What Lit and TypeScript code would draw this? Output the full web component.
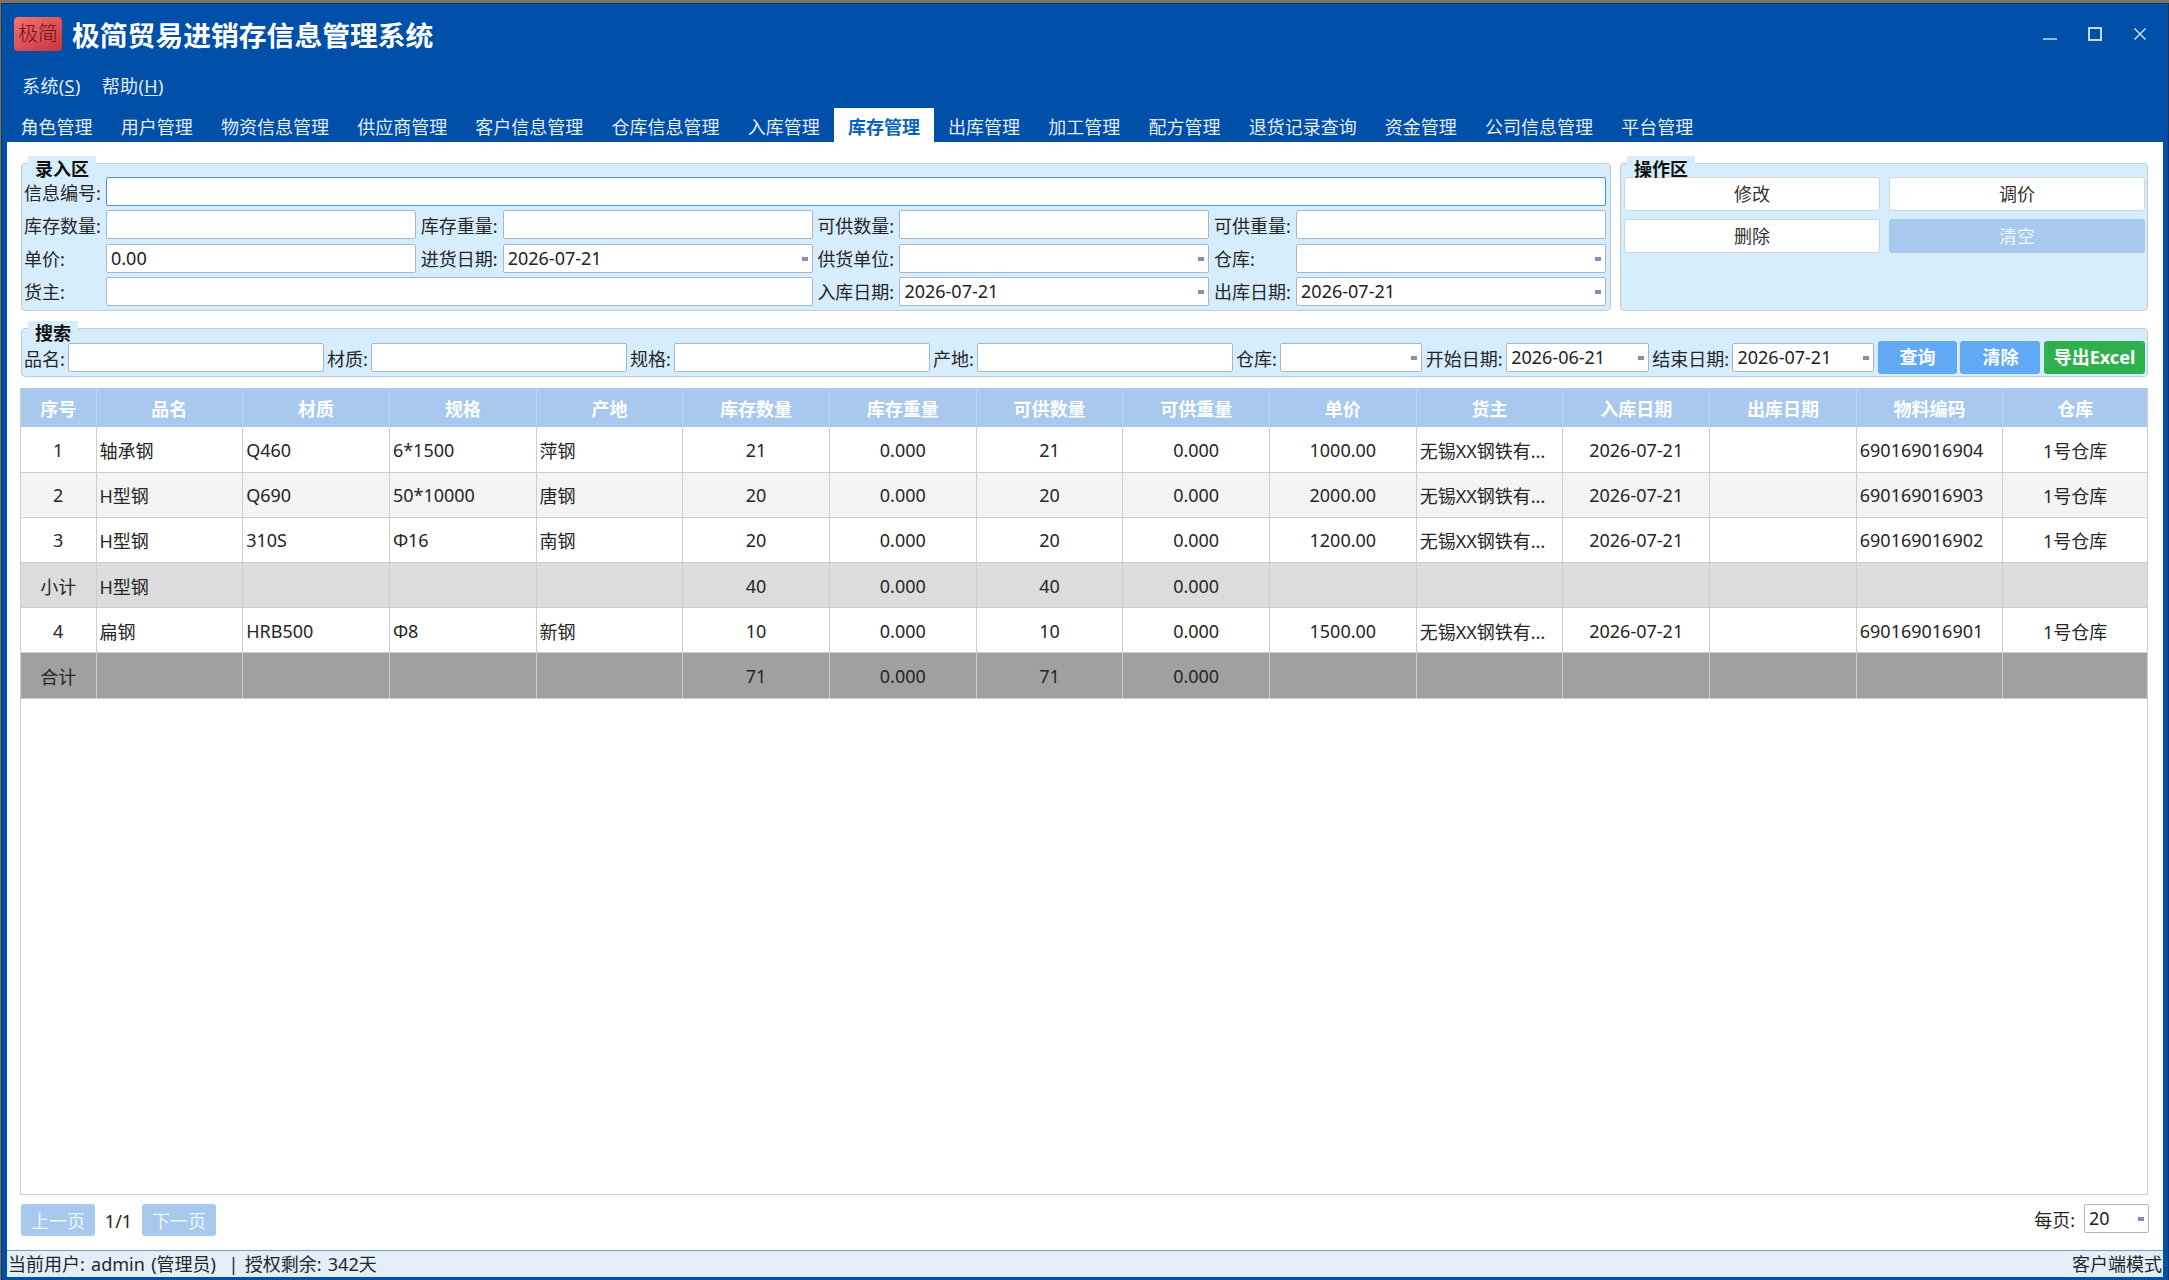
import { LitElement, html, css, nothing } from "lit";
import { customElement } from "lit/decorators.js";

const TABS = [
  "角色管理", "用户管理", "物资信息管理", "供应商管理", "客户信息管理", "仓库信息管理", "入库管理",
  "库存管理", "出库管理", "加工管理", "配方管理", "退货记录查询", "资金管理", "公司信息管理", "平台管理",
];

const HEADERS = [
  "序号", "品名", "材质", "规格", "产地", "库存数量", "库存重量", "可供数量", "可供重量",
  "单价", "货主", "入库日期", "出库日期", "物料编码", "仓库",
];

const OWNER = "无锡XX钢铁有...";
const DATE = "2026-07-21";

// kind: "" normal row, "alt" striped, "sub" subtotal, "sum" total
const ROWS: { kind: string; cells: string[] }[] = [
  { kind: "", cells: ["1", "轴承钢", "Q460", "6*1500", "萍钢", "21", "0.000", "21", "0.000", "1000.00", OWNER, DATE, "", "690169016904", "1号仓库"] },
  { kind: "alt", cells: ["2", "H型钢", "Q690", "50*10000", "唐钢", "20", "0.000", "20", "0.000", "2000.00", OWNER, DATE, "", "690169016903", "1号仓库"] },
  { kind: "", cells: ["3", "H型钢", "310S", "Φ16", "南钢", "20", "0.000", "20", "0.000", "1200.00", OWNER, DATE, "", "690169016902", "1号仓库"] },
  { kind: "sub", cells: ["小计", "H型钢", "", "", "", "40", "0.000", "40", "0.000", "", "", "", "", "", ""] },
  { kind: "", cells: ["4", "扁钢", "HRB500", "Φ8", "新钢", "10", "0.000", "10", "0.000", "1500.00", OWNER, DATE, "", "690169016901", "1号仓库"] },
  { kind: "sum", cells: ["合计", "", "", "", "", "71", "0.000", "71", "0.000", "", "", "", "", "", ""] },
];

// columns whose text sits at the left of the cell
const LEFT_COLS = new Set([1, 2, 3, 4, 10, 13]);

@customElement("app-root")
export class AppRoot extends LitElement {
  static styles = css`
    :host {
      display: block;
      width: 2169px;
      height: 1280px;
      background: #77746a;
      font-family: "Noto Sans", "Noto Sans CJK SC", sans-serif;
      font-size: 18px;
      color: #262626;
      overflow: hidden;
    }

    .window {
      height: 1277px;
      margin: 3px 0 0 1px;
      padding: 0 5px 3px;
      box-sizing: border-box;
      background: #004fa9;
      border: 1px solid #12355f;
      border-bottom: none;
      display: flex;
      flex-direction: column;
    }

    .titlebar {
      height: 66px;
      flex: none;
      padding: 13px 0 0 7px;
      box-sizing: border-box;
      display: flex;
      align-items: flex-start;
    }

    .logo {
      width: 48px;
      height: 34px;
      border-radius: 4px;
      background: linear-gradient(150deg, #f47474, #c9323e);
      color: #6e1018;
      font-size: 20px;
      font-weight: 300;
      line-height: 34px;
      text-align: center;
    }

    .title {
      margin-left: 10px;
      color: #fff;
      font-size: 27.8px;
      font-weight: 700;
      line-height: 36px;
    }

    .controls {
      margin-left: auto;
      margin-right: 16px;
      display: flex;
      gap: 31px;
      padding-top: 10px;
    }

    .controls svg {
      display: block;
      width: 14px;
      height: 14px;
      fill: none;
      stroke: #dbe8f7;
      stroke-width: 1.4;
    }

    .controls svg.max {
      stroke-width: 1.8;
    }

    .menubar {
      height: 38px;
      flex: none;
      display: flex;
      gap: 21px;
      padding-left: 15px;
      color: #e3ecf7;
      line-height: 32px;
      letter-spacing: 0.4px;
    }

    .menubar u {
      text-underline-offset: 2px;
    }

    .tabs {
      height: 34px;
      flex: none;
      display: flex;
      margin-left: -0.5px;
    }

    .tab {
      padding: 3px 14.1px 0;
      color: #e3ecf7;
      line-height: 32px;
      box-sizing: border-box;
      white-space: nowrap;
    }

    .tab.active {
      background: #fff;
      color: #0b62bd;
      font-weight: 700;
    }

    .main {
      flex: 1;
      min-height: 0;
      background: #fff;
      display: flex;
      flex-direction: column;
      padding: 21px 15px 0 14px;
    }

    .top {
      display: flex;
      gap: 9px;
      height: 148px;
      flex: none;
    }

    .group {
      position: relative;
      box-sizing: border-box;
      background: #d6edfe;
      border: 1px solid #c3ccd4;
      border-radius: 4px;
    }

    .group.entry {
      width: 1590px;
      flex: none;
      padding: 13px 0 0 2px;
    }

    .group.ops {
      flex: 1;
      padding: 13px 2px 0 3px;
    }

    .group.search {
      height: 49px;
      flex: none;
      margin-top: 17px;
      padding: 14px 2px 0 2px;
    }

    .legend {
      position: absolute;
      left: 6px;
      top: -8px;
      padding: 0 7px;
      background: #d6edfe;
      color: #111;
      font-weight: 700;
      line-height: 27px;
      height: 20px;
    }

    .search .legend {
      line-height: 25px;
    }

    .entry-grid {
      display: grid;
      grid-template-columns: repeat(4, 392px);
      grid-auto-rows: 29px;
      column-gap: 4.7px;
      row-gap: 4.3px;
    }

    .pair {
      display: flex;
      align-items: center;
    }

    .pair.w2 {
      grid-column: span 2;
    }

    .pair.w4 {
      grid-column: span 4;
    }

    .pair label {
      width: 82px;
      flex: none;
      white-space: nowrap;
    }

    .input {
      position: relative;
      flex: 1;
      min-width: 0;
      height: 29px;
      box-sizing: border-box;
      background: #fff;
      border: 1px solid #a9b6c6;
      border-radius: 2px;
      padding: 0 4px;
      line-height: 26px;
      color: #222;
      white-space: nowrap;
    }

    .input.focus {
      border-color: #4f94c6;
    }

    .input.combo::after {
      content: "";
      position: absolute;
      right: 4px;
      top: 12px;
      width: 6px;
      height: 4px;
      background: #7f92b4;
    }

    .ops-grid {
      display: grid;
      grid-template-columns: 1fr 1fr;
      grid-auto-rows: 34px;
      gap: 8px 9px;
    }

    .btn {
      box-sizing: border-box;
      border-radius: 3px;
      text-align: center;
      white-space: nowrap;
    }

    .btn.plain {
      background: #fff;
      border: 1px solid #cfd6dc;
      line-height: 33px;
      color: #333;
    }

    .btn.disabled {
      background: #a8c8ee;
      color: #eef5fd;
      line-height: 34px;
    }

    .search-row {
      display: flex;
      align-items: center;
      gap: 3.5px;
      height: 29px;
    }

    .search-row label {
      flex: none;
      white-space: nowrap;
    }

    .search-row .input.short {
      flex: none;
      width: 142px;
    }

    .search-row .input.short.wider {
      width: 142.5px;
    }

    .search-row .btn {
      flex: none;
      height: 33px;
      line-height: 33px;
      color: #fff;
      font-weight: 700;
      background: #62aaf5;
    }

    .search-row .btn.query {
      width: 79px;
    }

    .search-row .btn.clear {
      width: 80px;
    }

    .search-row .btn.excel {
      width: 101px;
      background: #2eb04f;
    }

    .table-wrap {
      flex: 1;
      min-height: 0;
      margin: 11px 0 0 -1px;
      border: 1px solid #cdcdcd;
      border-top: none;
      box-sizing: border-box;
    }

    table {
      width: 100%;
      table-layout: fixed;
      border-collapse: collapse;
    }

    col.first {
      width: 75px;
    }

    col.mid {
      width: 146.7px;
    }

    th {
      height: 39px;
      padding: 0;
      background: #a8c8ee;
      color: #fff;
      font-weight: 700;
      border-right: 1px solid #bcd5f2;
      overflow: hidden;
      white-space: nowrap;
    }

    td {
      height: 45.2px;
      padding: 1px 3px 0;
      box-sizing: border-box;
      text-align: center;
      border-right: 1px solid #cdcdcd;
      border-bottom: 1px solid #cdcdcd;
      white-space: nowrap;
      overflow: hidden;
    }

    td.left {
      text-align: left;
    }

    th:last-child,
    td:last-child {
      border-right: none;
    }

    tr.alt td {
      background: #f4f4f4;
    }

    tr.sub td {
      background: #dcdcdc;
    }

    tr.sum td {
      background: #a0a0a0;
    }

    .pager {
      height: 55px;
      flex: none;
      display: flex;
      align-items: flex-start;
      padding-top: 9px;
      box-sizing: border-box;
    }

    .pager .btn {
      width: 74px;
      height: 32px;
      line-height: 34px;
    }

    .pager .page-no {
      width: 47px;
      text-align: center;
      line-height: 34px;
    }

    .page-size {
      margin-left: auto;
      display: flex;
      align-items: center;
      gap: 9px;
      margin-right: -1px;
    }

    .page-size .input {
      flex: none;
      width: 65px;
    }

    .statusbar {
      height: 27px;
      flex: none;
      box-sizing: border-box;
      background: #e3eefa;
      border-top: 1px solid #7d9cbd;
      display: flex;
      justify-content: space-between;
      padding: 0 1px;
      line-height: 27px;
      white-space: pre;
      word-spacing: 1.6px;
    }
  `;

  private combo(value = "") {
    return html`<div class="input combo">${value || nothing}</div>`;
  }

  private pair(label: string, field: unknown, cls = "") {
    return html`<div class="pair ${cls}"><label>${label}</label>${field}</div>`;
  }

  private plain(value = "") {
    return html`<div class="input">${value || nothing}</div>`;
  }

  render() {
    return html`
      <div class="window">
        <div class="titlebar">
          <div class="logo">极简</div>
          <div class="title">极简贸易进销存信息管理系统</div>
          <div class="controls">
            <svg viewBox="0 0 14 14"><path d="M0 12h14" /></svg>
            <svg class="max" viewBox="0 0 14 14"><rect x="1" y="1" width="12" height="12" /></svg>
            <svg viewBox="0 0 14 14"><path d="M1.5 1.5l11 11M12.5 1.5l-11 11" /></svg>
          </div>
        </div>
        <div class="menubar">
          <span>系统(<u>S</u>)</span>
          <span>帮助(<u>H</u>)</span>
        </div>
        <div class="tabs">
          ${TABS.map((t) => html`<div class="tab ${t === "库存管理" ? "active" : ""}">${t}</div>`)}
        </div>
        <div class="main">
          <div class="top">
            <div class="group entry">
              <div class="legend">录入区</div>
              <div class="entry-grid">
                ${this.pair("信息编号:", html`<div class="input focus"></div>`, "w4")}
                ${this.pair("库存数量:", this.plain())}
                ${this.pair("库存重量:", this.plain())}
                ${this.pair("可供数量:", this.plain())}
                ${this.pair("可供重量:", this.plain())}
                ${this.pair("单价:", this.plain("0.00"))}
                ${this.pair("进货日期:", this.combo(DATE))}
                ${this.pair("供货单位:", this.combo())}
                ${this.pair("仓库:", this.combo())}
                ${this.pair("货主:", this.plain(), "w2")}
                ${this.pair("入库日期:", this.combo(DATE))}
                ${this.pair("出库日期:", this.combo(DATE))}
              </div>
            </div>
            <div class="group ops">
              <div class="legend">操作区</div>
              <div class="ops-grid">
                <div class="btn plain">修改</div>
                <div class="btn plain">调价</div>
                <div class="btn plain">删除</div>
                <div class="btn disabled">清空</div>
              </div>
            </div>
          </div>
          <div class="group search">
            <div class="legend">搜索</div>
            <div class="search-row">
              <label>品名:</label>${this.plain()}
              <label>材质:</label>${this.plain()}
              <label>规格:</label>${this.plain()}
              <label>产地:</label>${this.plain()}
              <label>仓库:</label><div class="input combo short"></div>
              <label>开始日期:</label><div class="input combo short wider">2026-06-21</div>
              <label>结束日期:</label><div class="input combo short">${DATE}</div>
              <div class="btn query">查询</div>
              <div class="btn clear">清除</div>
              <div class="btn excel">导出Excel</div>
            </div>
          </div>
          <div class="table-wrap">
            <table>
              <colgroup>
                <col class="first" />
                ${HEADERS.slice(2).map(() => html`<col class="mid" />`)}
                <col />
              </colgroup>
              <thead>
                <tr>${HEADERS.map((h) => html`<th>${h}</th>`)}</tr>
              </thead>
              <tbody>
                ${ROWS.map(
                  (r) => html`<tr class=${r.kind}>
                    ${r.cells.map((c, i) => html`<td class=${LEFT_COLS.has(i) ? "left" : ""}>${c}</td>`)}
                  </tr>`
                )}
              </tbody>
            </table>
          </div>
          <div class="pager">
            <div class="btn disabled">上一页</div>
            <div class="page-no">1/1</div>
            <div class="btn disabled">下一页</div>
            <div class="page-size">
              <span>每页:</span>
              <div class="input combo">20</div>
            </div>
          </div>
        </div>
        <div class="statusbar">
          <span>当前用户: admin (管理员)  | 授权剩余: 342天</span>
          <span>客户端模式</span>
        </div>
      </div>
    `;
  }
}

declare global {
  interface HTMLElementTagNameMap {
    "app-root": AppRoot;
  }
}
